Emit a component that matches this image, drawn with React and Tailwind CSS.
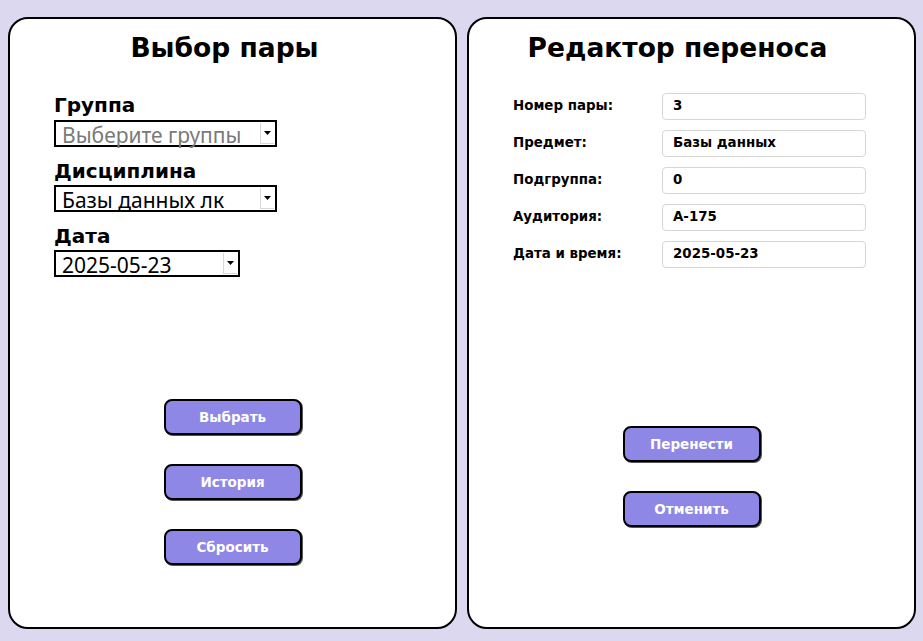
import { useState } from "react";

const font = { fontFamily: '"DejaVu Sans", Verdana, sans-serif' };

function Select({ value, placeholder, width }) {
  return (
    <div
      className={`flex items-center h-[27px] border-2 border-black bg-white ${width}`}
    >
      <span
        className={`flex-1 pl-[6px] pt-[2px] text-[21px] leading-[22px] whitespace-nowrap ${
          value ? "text-black" : "text-[#7a7a7a]"
        }`}
        style={{ fontFamily: '"Noto Sans", "Open Sans", sans-serif' }}
      >
        {value || placeholder}
      </span>
      <span className="flex items-center justify-center w-[14px] h-[21px] mr-[1px] border-b border-l border-[#d8d8d8]">
        <svg width="7" height="4" viewBox="0 0 7 4">
          <path d="M0 0h7L3.5 4z" fill="#000" />
        </svg>
      </span>
    </div>
  );
}

function Button({ children }) {
  return (
    <button className="w-[138px] h-[36px] rounded-[8px] border-2 border-black bg-[#8e87e5] text-white font-bold text-[13.5px] shadow-[1px_1px_0_#555]">
      {children}
    </button>
  );
}

export default function App() {
  const [lesson] = useState({
    number: "3",
    subject: "Базы данных",
    subgroup: "0",
    room: "А-175",
    date: "2025-05-23",
  });

  const rows = [
    { label: "Номер пары:", value: lesson.number },
    { label: "Предмет:", value: lesson.subject },
    { label: "Подгруппа:", value: lesson.subgroup },
    { label: "Аудитория:", value: lesson.room },
    { label: "Дата и время:", value: lesson.date },
  ];

  return (
    <div
      className="h-[641px] bg-[#dcd8f0] flex gap-[10px] pt-[17px] pl-2 pr-[7px] pb-[12px]"
      style={font}
    >
      {/* выбор пары */}
      <div className="flex-1 bg-white border-2 border-black rounded-[20px] flex flex-col">
        <h1 className="text-center font-bold text-[26.5px] leading-[36px] pt-[11px] pr-[16px]">
          Выбор пары
        </h1>
        <div className="pl-[44px] pt-[27px] flex flex-col">
          <label className="font-bold text-[20px] leading-[24px]">Группа</label>
          <div className="mt-[3px]">
            <Select placeholder="Выберите группы" width="w-[223px]" />
          </div>
          <label className="font-bold text-[20px] leading-[24px] mt-[12px]">
            Дисциплина
          </label>
          <div className="mt-[2px]">
            <Select value="Базы данных лк" width="w-[223px]" />
          </div>
          <label className="font-bold text-[20px] leading-[24px] mt-[12px]">
            Дата
          </label>
          <div className="mt-[2px]">
            <Select value="2025-05-23" width="w-[186px]" />
          </div>
        </div>
        <div className="flex flex-col items-center gap-[29px] mt-[122px]">
          <Button>Выбрать</Button>
          <Button>История</Button>
          <Button>Сбросить</Button>
        </div>
      </div>

      {/* редактор переноса */}
      <div className="flex-1 bg-white border-2 border-black rounded-[20px] flex flex-col">
        <h1 className="text-center font-bold text-[26.5px] leading-[36px] pt-[11px] pr-[28px]">
          Редактор переноса
        </h1>
        <div className="flex flex-col gap-[10px] pl-[44px] pt-[27px]">
          {rows.map((row) => (
            <div key={row.label} className="flex items-center">
              <span className="w-[149px] font-bold text-[13.4px]">
                {row.label}
              </span>
              <div className="w-[204px] h-[27px] border border-[#d6d6d6] rounded-[4px] flex items-center pl-[10px] font-bold text-[13.4px]">
                {row.value}
              </div>
            </div>
          ))}
        </div>
        <div className="flex flex-col items-center gap-[29px] mt-[158px]">
          <Button>Перенести</Button>
          <Button>Отменить</Button>
        </div>
      </div>
    </div>
  );
}
